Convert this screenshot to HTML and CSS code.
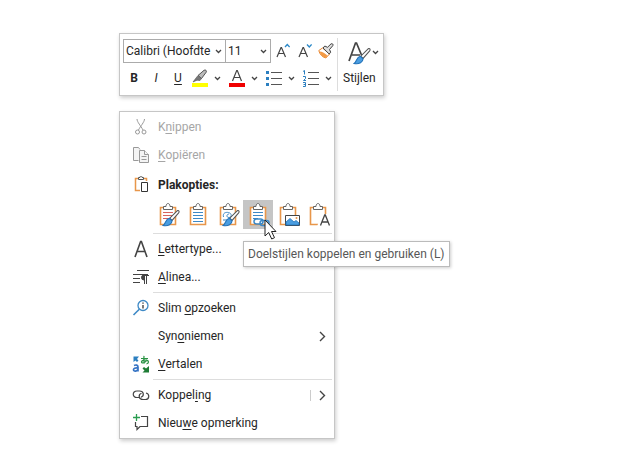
FILE: index.html
```
<!DOCTYPE html>
<html lang="nl">
<head>
  <meta charset="UTF-8">
  <title>Snelmenu</title>
  <link rel="stylesheet" href="styles.css">
</head>

<body>
  <!-- Shared shapes -->
  <svg class="sprite" aria-hidden="true">
    <symbol id="chevron" viewBox="0 0 7 5"><path d="M1 1l2.500 2.500L6 1" fill="none" stroke="#444" stroke-width="1.300"/></symbol>
    <symbol id="arrow" viewBox="0 0 7 11"><path d="M1 1l4.500 4.500L1 10" fill="none" stroke="#444" stroke-width="1.400"/></symbol>
    <symbol id="clipboard" viewBox="0 0 24 26">
      <path d="M4.500 5.500h15v17h-15z" fill="#fff" stroke="#e8964a" stroke-width="1.600"/>
      <path d="M7.500 7.500v-3H10c0-4 4-4 4 0h2.500v3z" fill="#fff" stroke="#666"/>
    </symbol>
    <symbol id="brush" viewBox="0 0 16 16">
      <path d="M15.300.8c.7.7.3 1.400-.3 2.200L9 9.800 6.800 7.700 13.300 1.200c.7-.7 1.400-1 2-.4z" fill="#fff" stroke="#555"/>
      <path d="M6.500 7.800l2.500 2.400c0 3-3.500 5.300-8.500 4.300C3.500 12.500 2.500 8.500 6.500 7.800z" fill="#4a9de0" stroke="#2272b9"/>
    </symbol>
  </svg>

  <div class="toolbar" role="toolbar">
    <div class="tools">
      <div class="row">
        <div class="combo font-name">
          <select aria-label="Lettertype"><option>Calibri (Hoofdte</option></select>
          <svg width="7" height="5"><use href="#chevron"/></svg>
        </div>
        <div class="combo font-size">
          <select aria-label="Tekengrootte"><option>11</option></select>
          <svg width="7" height="5"><use href="#chevron"/></svg>
        </div>
        <div class="buttons">
          <button class="tool" aria-label="Lettertype groter">
            <svg width="16" height="16" fill="none"><path d="M3 14L7 4.500h.5l4 9.500M4.500 10.500H10" stroke="#444" stroke-width="1.200"/><path d="M11 4l2.300-2.500L15.600 4" stroke="#2b88c8" stroke-width="1.300"/></svg>
          </button>
          <button class="tool" aria-label="Lettertype kleiner">
            <svg width="16" height="16" fill="none"><path d="M3 14L7 4.500h.5l4 9.500M4.500 10.500H10" stroke="#444" stroke-width="1.200"/><path d="M11 1.500L13.300 4l2.300-2.500" stroke="#2b88c8" stroke-width="1.300"/></svg>
          </button>
          <button class="tool" aria-label="Opmaak kopiëren">
            <svg width="16" height="16" fill="none"><path d="M4.500 5L.8 7.500c1 4 3.500 6.500 7 7.500l3.700-4z" fill="#fff" stroke="#e8832a"/><path d="M1.500 8.500c2.500 0 6 2 8 4.300L7.700 15C4.500 14 2.500 12 1.500 8.500z" fill="#f39a45"/><path d="M5 5l1.800-2 2.700 1.300L13 .9c1.300-.8 2.600.5 1.800 1.800L11.500 6.500l1.200 2.700-1.500 1.800z" fill="#ddd" stroke="#444"/></svg>
          </button>
        </div>
      </div>
      <div class="row">
        <button class="tool bold">B</button>
        <button class="tool italic">I</button>
        <button class="tool underline">U</button>
        <div class="split">
          <button class="tool" aria-label="Markeringskleur">
            <svg width="16" height="18"><path d="M0 14h16v4H0z" fill="#ff0"/><path d="M6 6.500L12 1.300c1.500-1 3 .4 2.200 1.900L9.500 9.500z" fill="#bbb" stroke="#555"/><path d="M6 6.500l3.500 3-1.500 2-3-.3L1 13l3-4z" fill="#777" stroke="#555" stroke-width=".6"/></svg>
          </button>
          <button class="drop" aria-label="Kleuren"><svg width="7" height="5"><use href="#chevron"/></svg></button>
        </div>
        <div class="split">
          <button class="tool" aria-label="Tekstkleur">
            <svg width="16" height="18"><path d="M0 14h16v4H0z" fill="#f00000"/><path d="M3.500 12L7.700 1.500h.6l4.200 10.500M5 8.500h6" fill="none" stroke="#444" stroke-width="1.200"/></svg>
          </button>
          <button class="drop" aria-label="Tekstkleuren"><svg width="7" height="5"><use href="#chevron"/></svg></button>
        </div>
        <div class="split">
          <button class="tool" aria-label="Opsommingstekens">
            <svg width="16" height="16"><path d="M0 1h3v3H0zM0 7h3v3H0zM0 13h3v3H0z" fill="#2b7fc0"/><path d="M5 2.500h11M5 8.500h11M5 14.500h11" stroke="#555"/></svg>
          </button>
          <button class="drop" aria-label="Meer opsommingstekens"><svg width="7" height="5"><use href="#chevron"/></svg></button>
        </div>
        <div class="split">
          <button class="tool" aria-label="Nummering">
            <svg width="16" height="17" fill="none"><path d="M5 2.500h11M5 8.500h11M5 14.500h11" stroke="#555"/><path d="M0 1.500L1.500.5v4M0 6.500h2.500v2L.5 10.500h2.500M0 12.500h2.500v4H0M.5 14.500h2" stroke="#2b7fc0"/></svg>
          </button>
          <button class="drop" aria-label="Meer nummering"><svg width="7" height="5"><use href="#chevron"/></svg></button>
        </div>
      </div>
    </div>
    <button class="styles">
      <svg width="32" height="24" fill="none"><path d="M2 20L8.500 2h1l5 12M5 14h8" stroke="#444" stroke-width="1.700"/><use href="#brush" x="6" y="7" width="18" height="17"/><use href="#chevron" x="25" y="9" width="7" height="5"/></svg>
      <span>Stijlen</span>
    </button>
  </div>

  <div class="menu" role="menu">
    <button class="item" disabled>
      <svg width="18" height="18" fill="none" stroke="#999"><path d="M5 1c0 3 4 7 6 11M12.500 1c0 3-4 7-6 11"/><circle cx="5.500" cy="14" r="2"/><circle cx="12" cy="14" r="2"/></svg>
      <span>K<u>n</u>ippen</span>
    </button>
    <button class="item" disabled>
      <svg width="18" height="18" fill="#f4f4f4" stroke="#999"><path d="M6.500 14.500h-5v-13h5l1.500 2"/><path d="M7.500 4.500h5l4 4v8h-9z"/><path d="M12.500 4.500v4h4M9.500 10.500h5M9.500 13.500h5"/></svg>
      <span><u>K</u>opiëren</span>
    </button>
    <div class="item heading">
      <svg width="18" height="18" fill="none"><path d="M8 14.500H3.500v-12H6M12 2.500h2.500V5" stroke="#e8964a" stroke-width="1.500"/><path d="M6.500 3.500v-2H8c0-2 2-2 2 0h1.500v2z" fill="#fff" stroke="#555"/><path d="M9.500 6.500h6v9h-6z" fill="#fff" stroke="#333"/></svg>
      <span>Plakopties:</span>
    </div>
    <div class="paste">
      <button aria-label="Oorspronkelijke opmaak behouden">
        <svg width="24" height="26"><use href="#clipboard"/><path d="M7 10.500h10M7 13.500h9M7 16.500h6" stroke="#d8645e"/><use href="#brush" x="6" y="8" width="18" height="17"/></svg>
      </button>
      <button aria-label="Doelstijlen gebruiken">
        <svg width="24" height="26"><use href="#clipboard"/><path d="M7 10.500h10M7 13.500h10M7 16.500h10M7 19.500h10" stroke="#3d89c6"/></svg>
      </button>
      <button aria-label="Opmaak samenvoegen">
        <svg width="24" height="26" fill="none"><use href="#clipboard"/><path d="M7.500 15c-1-4 2-5 5-4.500 4 1 3 5 .5 5-3 0-2.500-3.500 0-3.500M7 18h4" stroke="#3d89c6"/><use href="#brush" x="6" y="8" width="18" height="17"/></svg>
      </button>
      <button class="active" aria-describedby="tip" aria-label="Doelstijlen koppelen">
        <svg width="24" height="26" fill="none"><use href="#clipboard"/><path d="M7 10.500h10M7 13.500h10M7 16.500h5" stroke="#3d89c6"/><rect x="8" y="17" width="9" height="5" rx="2.500" stroke="#3d89c6" stroke-width="1.500"/><rect x="14" y="18.500" width="9" height="5" rx="2.500" stroke="#3d89c6" stroke-width="1.500"/></svg>
        <svg class="pointer" width="14" height="22"><path d="M1 1v16l3.700-3.500 3 6.500 2.800-1.300-3-6.200H12z" fill="#fff" stroke="#222"/></svg>
        <span class="tooltip" id="tip" role="tooltip">Doelstijlen koppelen en gebruiken (L)</span>
      </button>
      <button aria-label="Afbeelding">
        <svg width="24" height="26"><use href="#clipboard"/><path d="M9.500 13.500h14v10h-14z" fill="#fff" stroke="#444"/><path d="M10 23v-3l4-3.500 4 3.500 2-1.500 3 2.500v2z" fill="#4a9de0" stroke="#2272b9" stroke-width=".8"/><circle cx="20.500" cy="16" r="1" fill="#e8964a"/></svg>
      </button>
      <button aria-label="Alleen tekst behouden">
        <svg width="24" height="26"><use href="#clipboard"/><path d="M11 25l4-13h9v13z" fill="#fff"/><path d="M14.500 23.500L18.700 13h.6l4.200 10.500M16 20h6" fill="none" stroke="#444" stroke-width="1.300"/></svg>
      </button>
    </div>
    <hr>
    <button class="item">
      <svg width="18" height="18" fill="none" stroke="#444" stroke-width="1.600"><path d="M3 17L8.600 1.500h.8L15 17M5 11.500h8"/></svg>
      <span><u>L</u>ettertype...</span>
    </button>
    <button class="item">
      <svg width="18" height="18" fill="none" stroke="#444"><path d="M5 2.500h12M1 6.500h15M1 10.500h7M1 14.500h7M12.500 7v9M14.500 7v9M11 7.500h6" /><path d="M12 7a2.500 2.500 0 0 0 0 5z" fill="#444"/></svg>
      <span><u>A</u>linea...</span>
    </button>
    <hr>
    <button class="item">
      <svg width="18" height="18" fill="none"><circle cx="11" cy="6.500" r="5" stroke="#3d89c6" stroke-width="1.300"/><path d="M7.300 10.300L1.500 16" stroke="#3d89c6" stroke-width="1.600"/><path d="M11 6v3.500M11 3.500v1.300" stroke="#333" stroke-width="1.300"/></svg>
      <span>Slim <u>o</u>pzoeken</span>
    </button>
    <button class="item">
      <span class="no-icon">Syn<u>o</u>niemen</span>
      <svg class="arrow" width="7" height="11"><use href="#arrow"/></svg>
    </button>
    <button class="item">
      <svg width="18" height="18" fill="none"><path d="M1.500 1.500v5.500l2-1.500L5 7l1.500-1.500L5 4l2-2.500z" fill="#2b7fc0"/><path d="M2 10.500c2-1 4-.5 4 1.500v4.500M6 13c-3-.5-4.500.5-4.500 1.800 0 2 4 1.700 4.500-.6" stroke="#3573c4" stroke-width="1.700"/><path d="M9 3.500h7M12 .8c-.5 3-.2 5 .3 7.700M15 4.500C14 7.500 9.500 9 9.500 7s6.500-3 7 0c0 1-1 1.700-2 2" stroke="#2a9344" stroke-width="1.200"/><path d="M17 11v6.500h-6.500l2-2-2-2 1.500-1.500 2 1.500z" fill="#1e7c35"/></svg>
      <span><u>V</u>ertalen</span>
    </button>
    <hr>
    <button class="item">
      <svg width="18" height="18" fill="none" stroke="#444" stroke-width="1.200"><path d="M8 11.500H5C0 11.500 0 5 5 5h2.500C12 5 12.500 10 9 11.300"/><path d="M14 7c4 1 3.500 6.500-.5 6.500H11c-4.500 0-5-5-1.500-6.200"/></svg>
      <span>Koppel<u>i</u>ng</span>
      <svg class="arrow split-arrow" width="7" height="11"><use href="#arrow"/></svg>
    </button>
    <button class="item">
      <svg width="18" height="18" fill="none"><path d="M9 2.500h6.500v10H8L5 15.500v-3H3.500V8" stroke="#444" stroke-width="1.200"/><path d="M4.500 0v7M1 3.500h7" stroke="#2a9d50" stroke-width="1.300"/></svg>
      <span>Nieu<u>w</u>e opmerking</span>
    </button>
  </div>
</body>
</html>
```
FILE: styles.css
```
* {
  box-sizing: border-box;
}

body {
  margin: 0;
  padding: 33px 119px 16px;
  background-color: #fff;
  color: #262626;
  font-family: Roboto, sans-serif;
  font-size: 12px;
  line-height: 16px;
}

button,
select {
  margin: 0;
  padding: 0;
  border: 0;
  background: none;
  color: inherit;
  font: inherit;
}

svg {
  display: block;
  flex: none;
}

.sprite {
  position: absolute;
  width: 0;
  height: 0;
}

.toolbar,
.menu {
  width: max-content;
  border: 1px solid #c6c6c6;
  background-color: #fff;
  box-shadow: 1px 2px 4px rgba(0, 0, 0, 0.2);
}

/* Mini toolbar */
.toolbar {
  display: flex;
  margin-bottom: 15px;
  padding: 4px 3px;
}

.tools {
  padding-top: 1px;
  border-right: 1px solid #ddd;
}

.row {
  display: flex;
  align-items: center;
  height: 24px;
}

.row + .row {
  margin-top: 2px;
  height: 26px;
}

.combo {
  display: flex;
  align-items: center;
  height: 24px;
  padding-right: 3px;
  border: 1px solid #ababab;
}

.combo select {
  flex: 1;
  min-width: 0;
  padding-left: 2px;
  appearance: none;
}

.font-name {
  width: 103px;
}

.font-size {
  width: 46px;
  margin-left: -1px;
}

.buttons {
  display: flex;
}

.tool {
  display: flex;
  align-items: center;
  justify-content: center;
  width: 22px;
  height: 22px;
}

.drop {
  display: flex;
  align-items: center;
  justify-content: center;
  width: 12px;
  height: 22px;
}

.split {
  display: flex;
  width: 37px;
}

.bold {
  font-weight: bold;
}

.italic {
  font-style: italic;
}

.underline {
  text-decoration: underline;
  text-underline-offset: 2px;
}

.styles {
  display: flex;
  flex-direction: column;
  align-items: flex-end;
  justify-content: space-between;
  min-width: 42px;
  padding: 3px 1px 5px 5px;
}

.styles span {
  align-self: flex-start;
}

/* Context menu */
.menu {
  min-width: 216px;
  padding: 1px 0;
}

.item {
  display: flex;
  align-items: center;
  gap: 8px;
  width: 100%;
  height: 28px;
  padding: 0 8px 0 12px;
  text-align: left;
}

.item u {
  text-underline-offset: 2px;
}

.item:disabled {
  color: #a6a6a6;
}

.no-icon {
  margin-left: 26px;
}

.heading {
  height: 31px;
  font-weight: bold;
}

.paste {
  display: flex;
  margin-bottom: 4px;
  padding-left: 33px;
}

.paste button {
  position: relative;
  display: flex;
  align-items: center;
  justify-content: center;
  width: 30px;
  height: 29px;
}

.paste .active {
  z-index: 1;
  background-color: #c5c5c5;
}

.pointer {
  position: absolute;
  z-index: 2;
  top: 19px;
  left: 21px;
}

.tooltip {
  position: absolute;
  top: 41px;
  left: 0;
  padding: 4px;
  border: 1px solid #bbb;
  background-color: #fff;
  box-shadow: 1px 1px 3px rgba(0, 0, 0, 0.2);
  color: #575757;
  white-space: nowrap;
}

.menu hr {
  height: 1px;
  margin: 1px 2px 1px 33px;
  border: 0;
  background-color: #ddd;
}

.arrow {
  margin-left: auto;
}

.split-arrow {
  box-sizing: content-box;
  padding-left: 8px;
  border-left: 1px solid #ccc;
}
```
